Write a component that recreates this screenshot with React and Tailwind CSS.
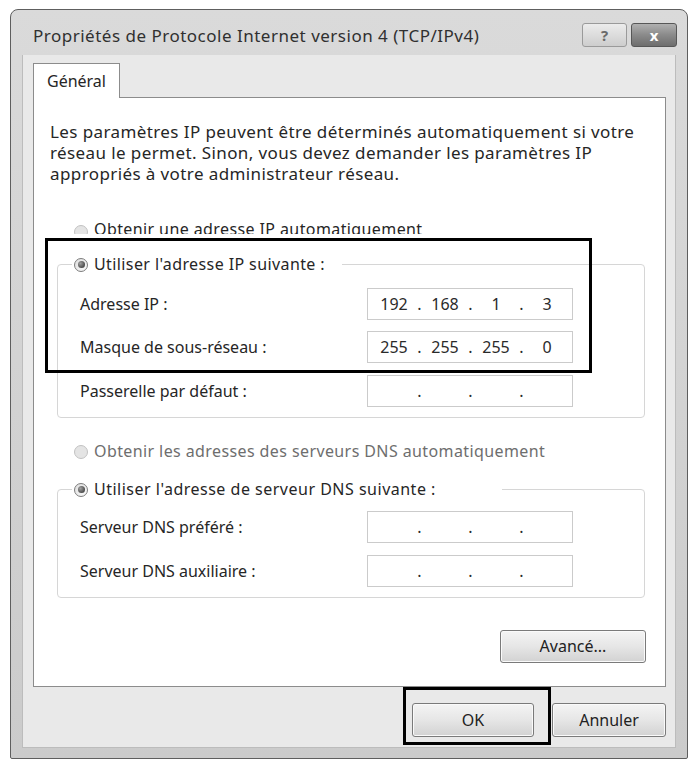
import React from "react";

function Radio({ checked, disabled }) {
    return (
        <span
            className={`inline-flex h-[14px] w-[14px] shrink-0 items-center justify-center rounded-full border ${
                disabled
                    ? "border-[#c2c2c2] bg-[#e4e4e4]"
                    : "border-[#7c7c7c] bg-gradient-to-br from-[#dedede] to-[#fbfbfb]"
            }`}
        >
            {checked && (
                <span className="h-[7px] w-[7px] rounded-full bg-[radial-gradient(circle_at_35%_35%,#a0a0a0,#2a2a2a)]" />
            )}
        </span>
    );
}

function IpField({ parts = ["", "", "", ""] }) {
    return (
        <div className="flex h-[32px] w-[206px] items-center border border-[#cbcbcb] bg-white pl-[4px] text-[#2a2a2a]">
            {parts.map((v, i) => (
                <React.Fragment key={i}>
                    {i > 0 && <span className="w-[7px] text-center">.</span>}
                    <span className="w-[44px] text-center">{v}</span>
                </React.Fragment>
            ))}
        </div>
    );
}

function FieldRow({ label, parts, className = "" }) {
    return (
        <div className={`flex items-center ${className}`}>
            <span className="w-[309px] pl-[22px]">{label}</span>
            <IpField parts={parts} />
        </div>
    );
}

function Button({ children, className = "" }) {
    return (
        <button
            className={`flex items-center justify-center rounded-[3px] border border-[#7a7a7a] bg-gradient-to-b from-[#f4f4f4] via-[#e6e6e6] to-[#d2d2d2] text-[#222] shadow-[inset_0_0_0_1px_#fafafa] ${className}`}
        >
            {children}
        </button>
    );
}

export default function App() {
    return (
        <div className="relative h-[762px] w-[692px] overflow-hidden bg-white pl-[10px] pt-[9px] font-['Noto_Sans',sans-serif] text-[16px] leading-[21px] text-[#262626]">
            {/* window frame */}
            <div className="flex h-[750px] w-[678px] flex-col rounded-t-[8px] rounded-b-[2px] border border-[#5e5e5e] bg-gradient-to-b from-[#dadada] to-[#cbcbcb]">
                {/* title bar */}
                <div className="flex h-[45px] shrink-0 items-start justify-between pl-[22px] pr-[10px]">
                    <span className="mt-[15px] text-[17px] tracking-[0.5px] text-[#303030]">
                        Propriétés de Protocole Internet version 4 (TCP/IPv4)
                    </span>
                    <div className="mt-[13px] flex gap-[4px]">
                        <div className="flex h-[24px] w-[45px] items-center justify-center rounded-[3px] border border-[#9a9a9a] bg-gradient-to-b from-[#ececec] to-[#cdcdcd] text-[15px] font-bold text-[#6a6a6a]">
                            ?
                        </div>
                        <div className="flex h-[24px] w-[46px] items-center justify-center rounded-[3px] border border-[#575757] bg-gradient-to-b from-[#b0b0b0] via-[#8a8a8a] to-[#6e6e6e] text-[15px] font-bold text-white">
                            x
                        </div>
                    </div>
                </div>

                {/* dialog body */}
                <div className="mx-[11px] mb-[10px] flex flex-1 flex-col border-x border-b border-[#bcbcbc] bg-[#e9e9e9] pt-[8px]">
                    <div className="relative z-10 -mb-px ml-[10px] flex h-[35px] w-[87px] items-center border-x border-t border-[#8c8c8c] bg-white pl-[13px]">
                        Général
                    </div>

                    <div className="ml-[10px] flex h-[590px] w-[633px] flex-col border border-[#8c8c8c] bg-white">
                        <p className="pl-[16px] pt-[23px] text-[17px] tracking-[0.4px]">
                            Les paramètres IP peuvent être déterminés automatiquement si votre
                            <br />
                            réseau le permet. Sinon, vous devez demander les paramètres IP
                            <br />
                            appropriés à votre administrateur réseau.
                        </p>

                        <div className="ml-[40px] mt-[35px] flex h-[15px] items-start gap-[6px] overflow-hidden tracking-[0.4px]">
                            <span className="mt-[4px]">
                                <Radio disabled />
                            </span>
                            <span>Obtenir une adresse IP automatiquement</span>
                        </div>

                        <fieldset className="ml-[23px] mt-[20px] w-[588px] rounded-[4px] border border-[#d6d6d6] pb-[10px]">
                            <legend className="ml-[14px] flex w-[270px] items-center gap-[6px] pl-[2px] tracking-[0.4px]">
                                <Radio checked />
                                <span>Utiliser l'adresse IP suivante :</span>
                            </legend>
                            <FieldRow className="mt-[13px]" label="Adresse IP :" parts={["192", "168", "1", "3"]} />
                            <FieldRow className="mt-[11px]" label="Masque de sous-réseau :" parts={["255", "255", "255", "0"]} />
                            <FieldRow className="mt-[12px]" label="Passerelle par défaut :" />
                        </fieldset>

                        <div className="ml-[40px] mt-[23px] flex items-center gap-[6px] tracking-[0.4px] text-[#6e6e6e]">
                            <Radio disabled />
                            <span>Obtenir les adresses des serveurs DNS automatiquement</span>
                        </div>

                        <fieldset className="ml-[23px] mt-[17px] w-[588px] rounded-[4px] border border-[#d6d6d6] pb-[10px]">
                            <legend className="ml-[14px] flex w-[430px] items-center gap-[6px] pl-[2px] tracking-[0.5px]">
                                <Radio checked />
                                <span>Utiliser l'adresse de serveur DNS suivante :</span>
                            </legend>
                            <FieldRow className="mt-[11px]" label="Serveur DNS préféré :" />
                            <FieldRow className="mt-[12px]" label="Serveur DNS auxiliaire :" />
                        </fieldset>

                        <Button className="mr-[19px] mt-[32px] h-[33px] w-[146px] self-end">Avancé...</Button>
                    </div>

                    <div className="mt-[16px] flex justify-end gap-[18px] pr-[9px]">
                        <Button className="h-[34px] w-[122px]">OK</Button>
                        <Button className="h-[34px] w-[114px]">Annuler</Button>
                    </div>
                </div>
            </div>

            {/* highlight frames */}
            <div className="absolute left-[45px] top-[238px] h-[135px] w-[547px] border-[3px] border-black" />
            <div className="absolute left-[403px] top-[687px] h-[58px] w-[148px] border-[3px] border-black" />
        </div>
    );
}
